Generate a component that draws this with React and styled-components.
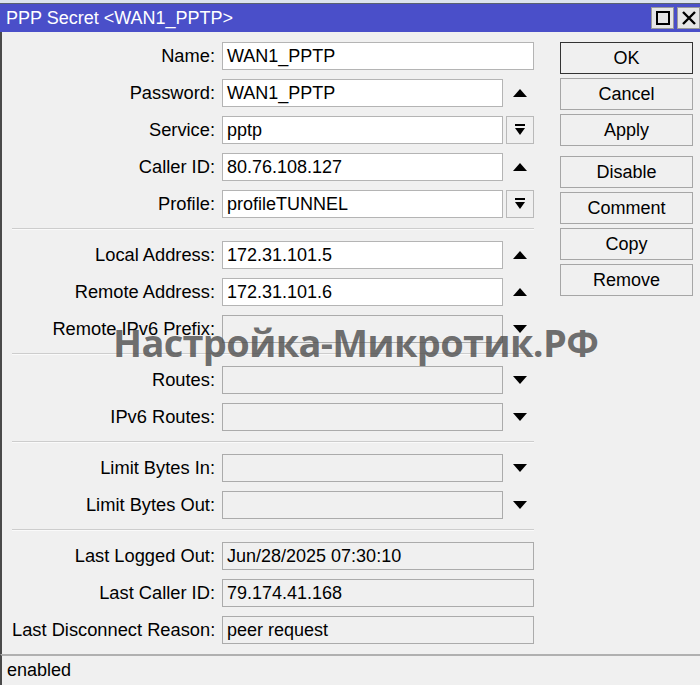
import React from "react";
import styled, { createGlobalStyle } from "styled-components";

const Global = createGlobalStyle`
  html, body { margin: 0; padding: 0; background: #f0f0f0; }
  body { font-family: "Liberation Sans", Arial, sans-serif; }
`;

const Frame = styled.div`
  position: relative;
  width: 700px;
  height: 685px;
  overflow: hidden;
  background: #f0f0f0;
  display: flex;
  flex-direction: column;
  font-size: 18px;
  color: #000;
`;

const TopStrip = styled.div`
  height: 3px;
  background: #dde4ee;
  border-bottom: 1px solid #5a6270;
`;

const TitleBar = styled.div`
  height: 28px;
  background: #4a4fc9;
  display: flex;
  align-items: center;
  padding-left: 6px;
  color: #fff;
  font-size: 18px;
`;

const Title = styled.span`
  flex: 1;
`;

const TitleButton = styled.div`
  width: 23px;
  height: 22px;
  margin-left: 3px;
  background: #e6e6e6;
  border: 1px solid #9a9a9a;
  display: flex;
  align-items: center;
  justify-content: center;
  box-sizing: border-box;
`;

const Body = styled.div`
  flex: 1;
  display: flex;
  padding-top: 10px;
  border-left: 2px solid #4a4a4a;
`;

const Form = styled.div`
  width: 522px;
  padding-left: 10px;
  display: flex;
  flex-direction: column;
`;

const Section = styled.div`
  display: flex;
  flex-direction: column;
  gap: 9px;
`;

const Separator = styled.div`
  height: 0;
  border-top: 1px solid #cdcdcd;
  border-bottom: 1px solid #fafafa;
  margin: 10px 0 11px;
`;

const Row = styled.div`
  display: flex;
  align-items: center;
  height: 28px;
`;

const Label = styled.div`
  width: 203px;
  text-align: right;
  white-space: nowrap;
  margin-right: 7px;
  font-size: 18.3px;
`;

const Field = styled.div`
  box-sizing: border-box;
  width: ${(p) => (p.$short ? "281px" : "312px")};
  height: 28px;
  padding-left: 4px;
  display: flex;
  align-items: center;
  background: ${(p) => (p.$kind === "edit" ? "#ffffff" : "#f0f0f0")};
  border: 1px solid ${(p) => (p.$kind === "edit" ? "#b4b4b4" : "#ababab")};
  white-space: nowrap;
  overflow: hidden;
`;

const Addon = styled.div`
  width: 31px;
  height: 28px;
  display: flex;
  align-items: center;
  justify-content: flex-end;
`;

const DropButton = styled.div`
  box-sizing: border-box;
  width: 28px;
  height: 28px;
  border: 1px solid #b9b9b9;
  background: #f0f0f0;
  display: flex;
  align-items: center;
  justify-content: center;
`;

const ArrowBox = styled.div`
  width: 28px;
  display: flex;
  justify-content: center;
`;

const Buttons = styled.div`
  margin-left: 26px;
  width: 133px;
  display: flex;
  flex-direction: column;
  gap: 4px;
`;

const Button = styled.div`
  box-sizing: border-box;
  height: 32px;
  display: flex;
  align-items: center;
  justify-content: center;
  background: #f0f0f0;
  border: 1px solid ${(p) => (p.$default ? "#333333" : "#a6a6a6")};
  margin-top: ${(p) => (p.$spaced ? "6px" : "0")};
`;

const StatusBar = styled.div`
  height: 29px;
  border-top: 2px solid #b0b0b0;
  border-left: 2px solid #4a4a4a;
  display: flex;
  align-items: center;
  padding-left: 5px;
  background: #f0f0f0;
`;

const Watermark = styled.div`
  position: absolute;
  left: 113px;
  top: 316px;
  font-family: "Open Sans", "Noto Sans", sans-serif;
  font-weight: 700;
  font-size: 38px;
  letter-spacing: -0.7px;
  color: rgba(80, 80, 80, 0.82);
  white-space: nowrap;
  pointer-events: none;
`;

const UpArrow = () => (
  <svg width="14" height="8" viewBox="0 0 14 8">
    <polygon points="7,0 14,8 0,8" fill="#000" />
  </svg>
);

const DownArrow = () => (
  <svg width="14" height="8" viewBox="0 0 14 8">
    <polygon points="0,0 14,0 7,8" fill="#000" />
  </svg>
);

const DropIcon = () => (
  <svg width="12" height="12" viewBox="0 0 12 12">
    <rect x="1" y="0" width="10" height="2" fill="#000" />
    <polygon points="1,4 11,4 6,11" fill="#000" />
  </svg>
);

const MaxIcon = () => (
  <svg width="14" height="14" viewBox="0 0 14 14">
    <rect x="1" y="1" width="12" height="12" fill="none" stroke="#000" strokeWidth="2" />
  </svg>
);

const CloseIcon = () => (
  <svg width="14" height="14" viewBox="0 0 14 14">
    <path d="M1 1 L13 13 M13 1 L1 13" stroke="#000" strokeWidth="2.4" />
  </svg>
);

const addon = (type) => {
  if (type === "up")
    return (
      <Addon>
        <ArrowBox>
          <UpArrow />
        </ArrowBox>
      </Addon>
    );
  if (type === "down")
    return (
      <Addon>
        <ArrowBox>
          <DownArrow />
        </ArrowBox>
      </Addon>
    );
  if (type === "drop")
    return (
      <Addon>
        <DropButton>
          <DropIcon />
        </DropButton>
      </Addon>
    );
  return null;
};

const sections = [
  [
    { label: "Name", value: "WAN1_PPTP", kind: "edit" },
    { label: "Password", value: "WAN1_PPTP", kind: "edit", addon: "up" },
    { label: "Service", value: "pptp", kind: "edit", addon: "drop" },
    { label: "Caller ID", value: "80.76.108.127", kind: "edit", addon: "up" },
    { label: "Profile", value: "profileTUNNEL", kind: "edit", addon: "drop" },
  ],
  [
    { label: "Local Address", value: "172.31.101.5", kind: "edit", addon: "up" },
    { label: "Remote Address", value: "172.31.101.6", kind: "edit", addon: "up" },
    { label: "Remote IPv6 Prefix", value: "", kind: "off", addon: "down" },
  ],
  [
    { label: "Routes", value: "", kind: "off", addon: "down" },
    { label: "IPv6 Routes", value: "", kind: "off", addon: "down" },
  ],
  [
    { label: "Limit Bytes In", value: "", kind: "off", addon: "down" },
    { label: "Limit Bytes Out", value: "", kind: "off", addon: "down" },
  ],
  [
    { label: "Last Logged Out", value: "Jun/28/2025 07:30:10", kind: "ro" },
    { label: "Last Caller ID", value: "79.174.41.168", kind: "ro" },
    { label: "Last Disconnect Reason", value: "peer request", kind: "ro" },
  ],
];

export default function App() {
  return (
    <Frame>
      <Global />
      <TopStrip />
      <TitleBar>
        <Title>PPP Secret &lt;WAN1_PPTP&gt;</Title>
        <TitleButton>
          <MaxIcon />
        </TitleButton>
        <TitleButton>
          <CloseIcon />
        </TitleButton>
      </TitleBar>
      <Body>
        <Form>
          {sections.map((rows, i) => (
            <React.Fragment key={i}>
              {i > 0 && <Separator />}
              <Section>
                {rows.map((r) => (
                  <Row key={r.label}>
                    <Label>{r.label}:</Label>
                    <Field $kind={r.kind} $short={!!r.addon}>
                      {r.value}
                    </Field>
                    {addon(r.addon)}
                  </Row>
                ))}
              </Section>
            </React.Fragment>
          ))}
        </Form>
        <Buttons>
          <Button $default>OK</Button>
          <Button>Cancel</Button>
          <Button>Apply</Button>
          <Button $spaced>Disable</Button>
          <Button>Comment</Button>
          <Button>Copy</Button>
          <Button>Remove</Button>
        </Buttons>
      </Body>
      <StatusBar>enabled</StatusBar>
      <Watermark>Настройка-Микротик.РФ</Watermark>
    </Frame>
  );
}
